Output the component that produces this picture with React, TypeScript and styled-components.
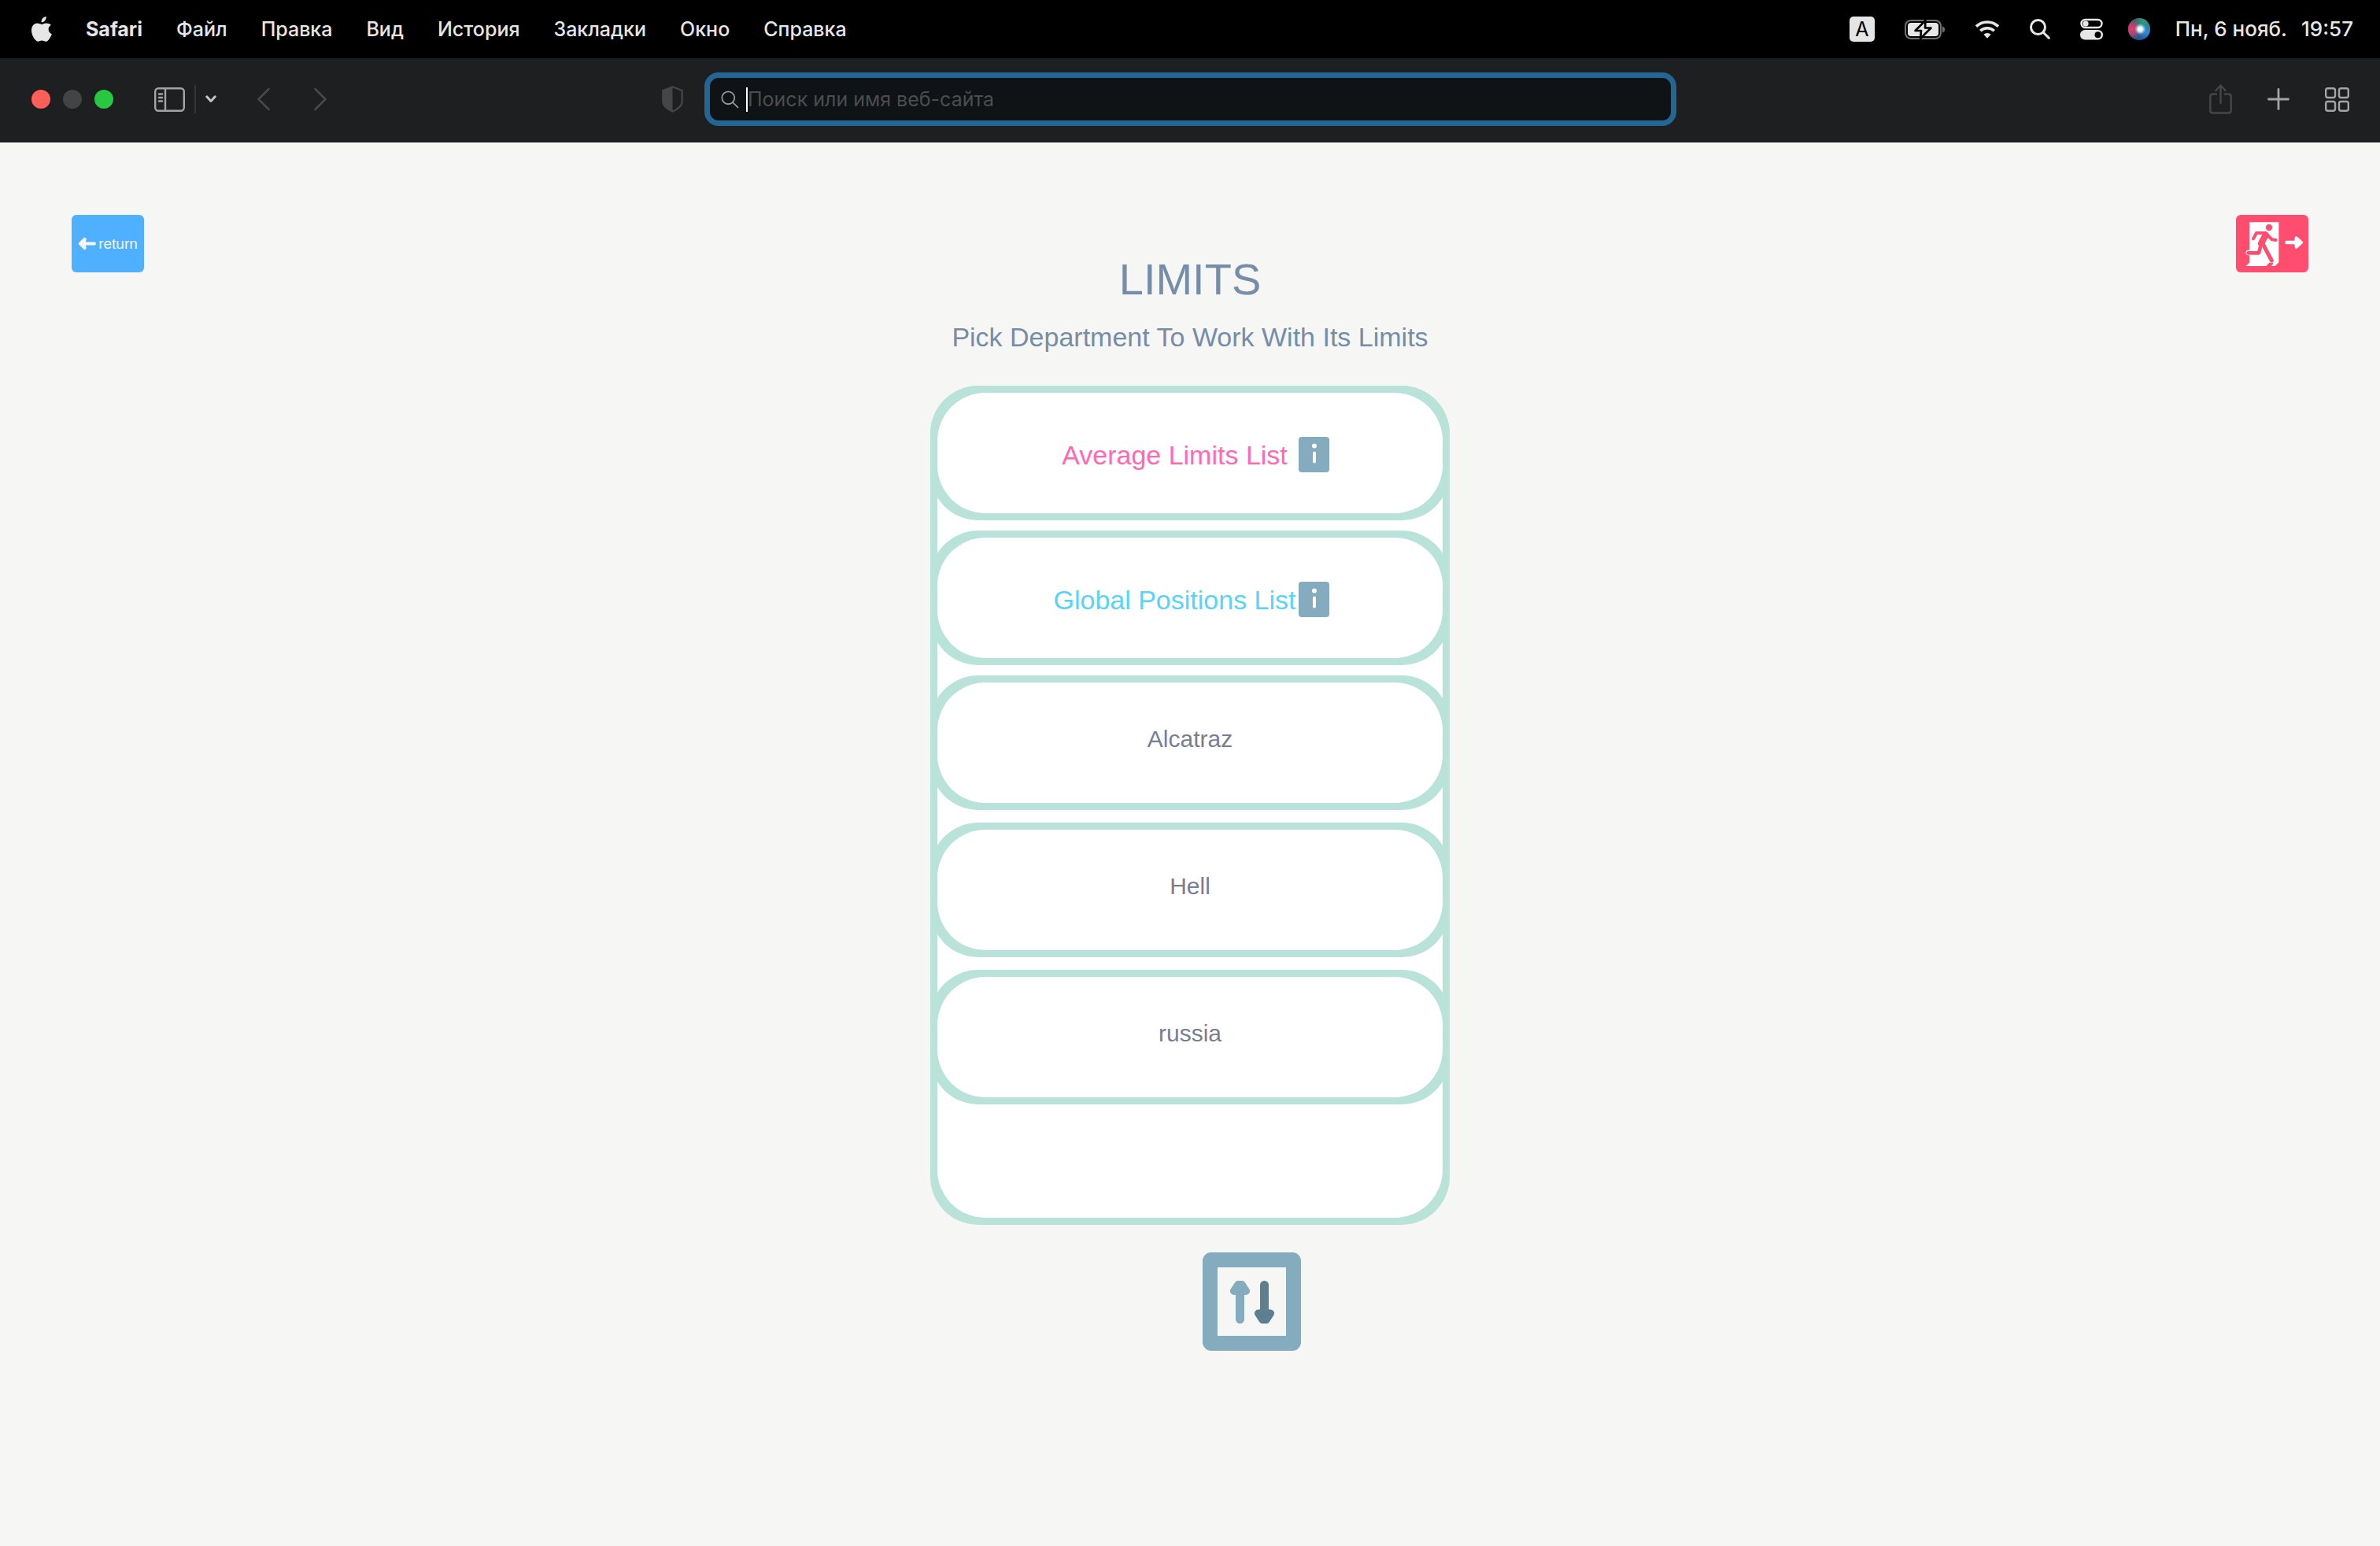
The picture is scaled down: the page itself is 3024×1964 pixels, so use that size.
import React from "react";
import styled, { createGlobalStyle } from "styled-components";

const uiFont = `Inter, "Noto Sans", sans-serif`;
const pageFont = `"Liberation Sans", Arial, sans-serif`;

const mint = "#b9e3d9";
const steel = "#84abbe";

const GlobalStyle = createGlobalStyle`
  * { box-sizing: border-box; }
  body { margin: 0; background: #f6f6f4; }
  button, input { font: inherit; color: inherit; }
`;

const Screen = styled.div`
  display: flex;
  flex-direction: column;
  min-height: 100vh;
`;

/* ---------- system menu bar ---------- */

const MenuBar = styled.header`
  display: flex;
  align-items: center;
  justify-content: space-between;
  height: 74px;
  padding: 0 34px 0 40px;
  background: #000;
  color: #e6e6e6;
  font-family: ${uiFont};
  font-size: 25px;
  font-weight: 500;
`;

const MenuGroup = styled.nav`
  display: flex;
  align-items: center;
  gap: 43px;
`;

const StatusGroup = styled.div<{ $gap: number }>`
  display: flex;
  align-items: center;
  gap: ${(p) => p.$gap}px;
`;

const BareButton = styled.button<{ $strong?: boolean }>`
  display: flex;
  align-items: center;
  padding: 0;
  border: 0;
  background: none;
  line-height: 32px;
  white-space: nowrap;
  font-weight: ${(p) => (p.$strong ? 700 : 500)};
  cursor: pointer;

  svg { display: block; }
`;

const InputSource = styled.span`
  width: 32px;
  height: 32px;
  border-radius: 5px;
  background: #e4e6e5;
  color: #000;
  text-align: center;
  line-height: 32px;
  font-weight: 400;
`;

const Clock = styled.time`
  display: flex;
  gap: 18px;
  font-size: 26px;
  line-height: 32px;
  white-space: nowrap;
`;

/* ---------- browser toolbar ---------- */

const Toolbar = styled.div`
  display: grid;
  grid-template-columns: 1fr minmax(0, 1235px) 1fr;
  align-items: center;
  height: 107px;
  padding: 0 39px 3px 40px;
  background: #1e1f21;
  color: #a3a4a5;
`;

const ToolSide = styled.div<{ $end?: boolean }>`
  display: flex;
  align-items: center;
  gap: ${(p) => (p.$end ? "45px" : "52px")};
  justify-content: ${(p) => (p.$end ? "flex-end" : "space-between")};
  padding-right: ${(p) => (p.$end ? 0 : 27)}px;
`;

const ToolCluster = styled.div<{ $gap: number }>`
  display: flex;
  align-items: center;
  gap: ${(p) => p.$gap}px;
`;

const Light = styled.button<{ $color: string }>`
  width: 24px;
  height: 24px;
  padding: 0;
  border: 0;
  border-radius: 50%;
  background: ${(p) => p.$color};
`;

const Divider = styled.span`
  width: 2px;
  height: 36px;
  background: #343537;
`;

const Address = styled.label`
  display: flex;
  align-items: center;
  height: 68px;
  padding: 0 14px;
  border: 7px solid #236693;
  border-radius: 18px;
  background: #0f1315;
  color: #97999a;
`;

const Caret = styled.span`
  width: 2px;
  height: 31px;
  margin-left: 9px;
  background: #fff;
`;

const AddressInput = styled.input`
  flex: 1;
  min-width: 0;
  height: 40px;
  padding: 0;
  border: 0;
  outline: 0;
  background: none;
  color: #fff;
  caret-color: transparent;
  font-family: ${uiFont};
  font-size: 25px;

  &::placeholder { color: #4b4d4e; opacity: 1; }
`;

/* ---------- page ---------- */

const Page = styled.main`
  display: grid;
  grid-template-columns: 92px minmax(0, 1fr) 92px;
  align-items: start;
  padding: 92px 91px;
  font-family: ${pageFont};
`;

const CornerButton = styled.button<{ $color: string }>`
  display: flex;
  align-items: center;
  justify-content: center;
  gap: 3px;
  height: 73px;
  padding: 0;
  border: 0;
  border-radius: 6px;
  background: ${(p) => p.$color};
  color: #f6f6f4;
  font-size: 19px;
  cursor: pointer;

  svg { display: block; }
`;

const Content = styled.section`
  display: flex;
  flex-direction: column;
  align-items: center;
  padding-top: 50px;
`;

const Title = styled.h1`
  margin: 0;
  color: #748da9;
  font-size: 56px;
  font-weight: 400;
  line-height: 64px;
`;

const Subtitle = styled.p`
  margin: 21px 0 42px;
  color: #748da9;
  font-size: 34px;
  line-height: 40px;
`;

const Frame = styled.div`
  padding: 9px;
  border-radius: 61px;
  background: ${mint};
`;

const Panel = styled(Frame)`
  width: 100%;
  max-width: 660px;
`;

const PanelFace = styled.div`
  display: flex;
  flex-direction: column;
  gap: 13px;
  padding-bottom: 144px;
  border-radius: 61px;
  background: #fff;
`;

const CardStack = styled.ul<{ $gap: number }>`
  display: flex;
  flex-direction: column;
  gap: ${(p) => p.$gap}px;
  margin: 0 -9px;
  padding: 0;
  list-style: none;

  &:first-child { margin-top: -9px; }
`;

const CardFace = styled.div<{ $plain?: boolean }>`
  display: flex;
  align-items: center;
  justify-content: center;
  height: 153px;
  padding: ${(p) => (p.$plain ? "0 0 9px" : "4px 0 0")};
  border-radius: 61px;
  background: #fff;
`;

const CardLink = styled.button<{ $color: string; $plain?: boolean }>`
  min-width: ${(p) => (p.$plain ? 0 : 315)}px;
  padding: 0;
  border: 0;
  background: none;
  color: ${(p) => p.$color};
  font-size: ${(p) => (p.$plain ? 30 : 34)}px;
  line-height: 46px;
  text-align: center;
  white-space: nowrap;
  cursor: pointer;
`;

const InfoButton = styled.button`
  width: 39px;
  height: 45px;
  padding: 0;
  border: 0;
  border-radius: 4px;
  background: ${steel};
  cursor: pointer;

  svg { display: block; }
`;

const SortButton = styled.button`
  width: 125px;
  height: 125px;
  margin: 35px 0 0 156px;
  padding: 0;
  border: 19px solid ${steel};
  border-radius: 11px;
  background: #f6f6f4;
  cursor: pointer;

  svg { display: block; }
`;

/* ---------- drawings ---------- */

const AppleIcon = () => (
  <svg width="26" height="32" viewBox="0 0 26 32" fill="#e6e6e6">
    <path d="M18.8 0c.2 2-.6 3.900-1.700 5.200-1.100 1.300-2.900 2.300-4.500 2.100-.3-1.900.6-3.900 1.700-5.100C15.400 1 17.300.1 18.800 0z" />
    <path d="M24.900 10.800c-2.300 1.400-3.300 3.200-3.300 5.500 0 2.700 1.600 4.900 4.200 6-.6 1.900-1.500 3.700-2.700 5.400-1.400 2-2.700 4-4.800 4-2 0-2.700-1.200-5-1.200-2.400 0-3.200 1.200-5.100 1.200-2.100 0-3.600-2.100-5-4.100C1.400 25 0 21.300 0 17.600c0-5.900 3.900-9 7.500-9 2.200 0 3.900 1.300 5.300 1.300 1.300 0 3.300-1.400 5.900-1.400 2.400 0 4.700.9 6.200 2.300z" />
  </svg>
);

const BatteryIcon = () => (
  <svg width="51" height="32" viewBox="0 0 51 32">
    <rect x="1" y="5" width="45" height="23" rx="7" fill="none" stroke="#717171" strokeWidth="2" />
    <path d="M48 12.500c2.500.9 3 2 3 4s-.5 3.100-3 4z" fill="#717171" />
    <rect x="4" y="8" width="39" height="17" rx="4" fill="#e6e6e6" />
    <path d="M26.500 5 13.500 18h7.500L20 28l13.500-13.500H26z" fill="#e6e6e6" stroke="#000" strokeWidth="2.600" strokeLinejoin="round" />
  </svg>
);

const WifiIcon = () => (
  <svg width="32" height="26" viewBox="0 0 33 26" fill="none" stroke="#e6e6e6" strokeWidth="3.800">
    <path d="M2 9.500a21 21 0 0 1 29 0" />
    <path d="M7.500 15.300a13 13 0 0 1 18 0" />
    <path d="M16.500 25l-4.700-5a7 7 0 0 1 9.400 0z" fill="#e6e6e6" stroke="none" />
  </svg>
);

const SearchIcon = ({ size, weight }: { size: number; weight: number }) => (
  <svg width={size} height={size} viewBox="0 0 26 26" fill="none" stroke="currentColor" strokeWidth={weight} strokeLinecap="round">
    <circle cx="10.500" cy="10.500" r="9" />
    <path d="M17.300 17.300l7 7" />
  </svg>
);

const ControlIcon = () => (
  <svg width="29" height="28" viewBox="0 0 29 28">
    <rect x="1.500" y="2" width="26" height="10" rx="5" fill="none" stroke="#e6e6e6" strokeWidth="2.400" />
    <circle cx="7" cy="7" r="3.600" fill="#e6e6e6" />
    <rect x="0" y="15" width="29" height="12.500" rx="6.200" fill="#e6e6e6" />
    <circle cx="22.500" cy="21.200" r="4" fill="#000" />
  </svg>
);

const SiriIcon = () => (
  <svg width="28" height="28" viewBox="0 0 28 28">
    <defs>
      <linearGradient id="siriBase" x1="0.300" y1="0" x2="0.700" y2="1">
        <stop offset="0" stopColor="#4a5a5c" />
        <stop offset="0.500" stopColor="#3f6a86" />
        <stop offset="1" stopColor="#1b4f8c" />
      </linearGradient>
      <radialGradient id="siriPink" cx="0.180" cy="0.500" r="0.400">
        <stop offset="0" stopColor="#e83a72" />
        <stop offset="0.600" stopColor="#c93a6c" stopOpacity="0.800" />
        <stop offset="1" stopColor="#c93a6c" stopOpacity="0" />
      </radialGradient>
      <radialGradient id="siriGreen" cx="0.720" cy="0.150" r="0.450">
        <stop offset="0" stopColor="#1fa57c" />
        <stop offset="1" stopColor="#1fa57c" stopOpacity="0" />
      </radialGradient>
      <radialGradient id="siriBlue" cx="0.850" cy="0.650" r="0.400">
        <stop offset="0" stopColor="#2a90e8" />
        <stop offset="1" stopColor="#2a90e8" stopOpacity="0" />
      </radialGradient>
      <radialGradient id="siriGlow" cx="0.550" cy="0.500" r="0.260">
        <stop offset="0" stopColor="#fff" />
        <stop offset="0.400" stopColor="#e2f6ff" />
        <stop offset="1" stopColor="#9fd8f0" stopOpacity="0" />
      </radialGradient>
    </defs>
    <circle cx="14" cy="14" r="14" fill="url(#siriBase)" />
    <circle cx="14" cy="14" r="14" fill="url(#siriPink)" />
    <circle cx="14" cy="14" r="14" fill="url(#siriGreen)" />
    <circle cx="14" cy="14" r="14" fill="url(#siriBlue)" />
    <circle cx="14" cy="14" r="14" fill="url(#siriGlow)" />
  </svg>
);

const SidebarIcon = () => (
  <svg width="39" height="31" viewBox="0 0 39 31" fill="none" stroke="#a3a4a5" strokeWidth="2.400" strokeLinecap="round">
    <rect x="1.200" y="1.200" width="36.600" height="28.600" rx="4" />
    <path d="M14 2v27M6 8.500h4M6 13h4M6 17.500h4" />
  </svg>
);

const ChevronDown = () => (
  <svg width="14" height="10" viewBox="0 0 14 10" fill="none" stroke="#c4c5c6" strokeWidth="3" strokeLinecap="round" strokeLinejoin="round">
    <path d="M1.800 1.800 7 7.500l5.200-5.700" />
  </svg>
);

const Chevron = ({ flip }: { flip?: boolean }) => (
  <svg width="16" height="30" viewBox="0 0 16 30" fill="none" stroke="#47484a" strokeWidth="2.600" strokeLinecap="round" strokeLinejoin="round">
    <path d={flip ? "M1.500 2 14.500 15 1.500 28" : "M14.500 2 1.500 15 14.500 28"} />
  </svg>
);

const ShieldIcon = () => (
  <svg width="27" height="34" viewBox="0 0 27 34">
    <path d="M13.500 1.200 25.700 6v14c0 6-6 9.500-12.200 12.700C7.300 29.500 1.300 26 1.300 20V6z" fill="none" stroke="#454648" strokeWidth="2.200" strokeLinejoin="round" />
    <path d="M13.500 1.200V32.700C7.300 29.500 1.300 26 1.300 20V6z" fill="#454648" />
  </svg>
);

const ShareIcon = () => (
  <svg width="29" height="38" viewBox="0 0 29 38" fill="none" stroke="#454648" strokeWidth="2.400" strokeLinecap="round" strokeLinejoin="round">
    <path d="M9 12.500H4.500q-3.200 0-3.200 3.200v17.600q0 3.200 3.200 3.200h20q3.200 0 3.200-3.200V15.700q0-3.200-3.200-3.200H20" />
    <path d="M14.500 24V2M8.500 8l6-6.500 6 6.500" />
  </svg>
);

const PlusIcon = () => (
  <svg width="28" height="28" viewBox="0 0 28 28" stroke="#a3a4a5" strokeWidth="2.800" strokeLinecap="round">
    <path d="M14 1.500v25M1.500 14h25" />
  </svg>
);

const TabsIcon = () => (
  <svg width="31" height="31" viewBox="0 0 31 31" fill="none" stroke="#a3a4a5" strokeWidth="2.400">
    <rect x="1.200" y="1.200" width="11.800" height="11.800" rx="2.500" />
    <rect x="18" y="1.200" width="11.800" height="11.800" rx="2.500" />
    <rect x="1.200" y="18" width="11.800" height="11.800" rx="2.500" />
    <rect x="18" y="18" width="11.800" height="11.800" rx="2.500" />
  </svg>
);

const ReturnArrow = () => (
  <svg width="23" height="17" viewBox="0 0 23 17" fill="#f6f6f4" stroke="#f6f6f4" strokeLinejoin="round" strokeLinecap="round">
    <path d="M2 8.500 8.500 2 9.500 3 8 8.500l1.500 5.500-1 1z" strokeWidth="2.500" />
    <path d="M8 8.500h13" strokeWidth="4" />
  </svg>
);

const ExitIcon = () => (
  <svg width="92" height="73" viewBox="93 69 276 219">
    <path d="M145 97H256V250L242 264H131L145 250z" fill="#fff" />
    <path d="M140 213H182" stroke="#fff" strokeWidth="19" strokeLinecap="round" />
    <g fill="none" stroke="#ff4d70" strokeLinecap="round" strokeLinejoin="round">
      <path d="M140 214H180L189 180" strokeWidth="14" />
      <path d="M159 160L171 138H206L230 163L245 165" strokeWidth="12" />
      <path d="M206 146L189 178" strokeWidth="25" />
      <path d="M198 184L229 243" strokeWidth="15" />
    </g>
    <circle cx="219" cy="117" r="12.500" fill="#ff4d70" />
    <path d="M208 264L220 251H236L228 264z" fill="#ff4d70" />
    <g fill="#fff" stroke="#fff" strokeLinecap="round" strokeLinejoin="round">
      <path d="M286 174H325" strokeWidth="13" />
      <path d="M323 156L343 174L323 192L320 174z" strokeWidth="11" />
    </g>
  </svg>
);

const InfoGlyph = () => (
  <svg width="39" height="45" viewBox="0 0 39 45" fill="#fff">
    <circle cx="20" cy="11.500" r="3" />
    <rect x="18" y="18.500" width="4" height="15" rx="2" />
  </svg>
);

const SortGlyph = () => (
  <svg width="87" height="87" viewBox="0 0 87 87">
    <g fill={steel}>
      <path d="M25.500 17h6q2 0 3.200 2l5.600 8.500q1.800 3.500-.3 5.500-1.500 2-4 2H21q-2.500 0-4-2-2.100-2-.3-5.500L22.300 19q1.200-2 3.200-2z" />
      <rect x="23" y="26" width="11" height="45.500" rx="5.500" />
    </g>
    <g fill="#5d7f90">
      <path d="M56.500 71.500h6q2 0 3.200-2l5.600-8.500q1.800-3.500-.3-5.500-1.500-2-4-2H52q-2.500 0-4 2-2.100 2-.3 5.500l5.600 8.500q1.200 2 3.200 2z" />
      <rect x="54" y="17" width="11" height="45.500" rx="5.500" />
    </g>
  </svg>
);

/* ---------- composition ---------- */

const menus = ["Файл", "Правка", "Вид", "История", "Закладки", "Окно", "Справка"];

const lists = [
  { name: "Average Limits List", color: "#ff69b4" },
  { name: "Global Positions List", color: "#5ad2fa" },
];

const departments = ["Alcatraz", "Hell", "russia"];

export default function App() {
  return (
    <Screen>
      <GlobalStyle />
      <MenuBar>
        <MenuGroup>
          <BareButton aria-label="Apple"><AppleIcon /></BareButton>
          <BareButton $strong>Safari</BareButton>
          {menus.map((m) => (
            <BareButton key={m}>{m}</BareButton>
          ))}
        </MenuGroup>
        <StatusGroup $gap={32}>
          <StatusGroup $gap={38}>
            <InputSource>A</InputSource>
            <BatteryIcon />
            <WifiIcon />
            <BareButton aria-label="Spotlight"><SearchIcon size={26} weight={3} /></BareButton>
            <BareButton aria-label="Control Center"><ControlIcon /></BareButton>
          </StatusGroup>
          <BareButton aria-label="Siri"><SiriIcon /></BareButton>
          <Clock>
            <span>Пн, 6 нояб.</span>
            <span>19:57</span>
          </Clock>
        </StatusGroup>
      </MenuBar>

      <Toolbar>
        <ToolSide>
          <ToolCluster $gap={52}>
            <ToolCluster $gap={16}>
              <Light $color="#ff5f57" aria-label="Close" />
              <Light $color="#434446" aria-label="Minimize" />
              <Light $color="#28c840" aria-label="Zoom" />
            </ToolCluster>
            <ToolCluster $gap={12}>
              <BareButton aria-label="Sidebar"><SidebarIcon /></BareButton>
              <Divider />
              <BareButton aria-label="Tab groups"><ChevronDown /></BareButton>
            </ToolCluster>
            <ToolCluster $gap={56}>
              <BareButton aria-label="Back"><Chevron /></BareButton>
              <BareButton aria-label="Forward"><Chevron flip /></BareButton>
            </ToolCluster>
          </ToolCluster>
          <BareButton aria-label="Privacy report"><ShieldIcon /></BareButton>
        </ToolSide>
        <Address>
          <SearchIcon size={23} weight={2} />
          <Caret />
          <AddressInput type="text" aria-label="Address" placeholder="Поиск или имя веб-сайта" />
        </Address>
        <ToolSide $end>
          <BareButton aria-label="Share"><ShareIcon /></BareButton>
          <BareButton aria-label="New tab"><PlusIcon /></BareButton>
          <BareButton aria-label="Tab overview"><TabsIcon /></BareButton>
        </ToolSide>
      </Toolbar>

      <Page>
        <CornerButton $color="#4eb0ff">
          <ReturnArrow />
          return
        </CornerButton>
        <Content>
          <Title>LIMITS</Title>
          <Subtitle>Pick Department To Work With Its Limits</Subtitle>
          <Panel>
            <PanelFace>
              <CardStack $gap={13}>
                {lists.map((l) => (
                  <Frame as="li" key={l.name}>
                    <CardFace>
                      <CardLink $color={l.color}>{l.name}</CardLink>
                      <InfoButton aria-label={`About ${l.name}`}><InfoGlyph /></InfoButton>
                    </CardFace>
                  </Frame>
                ))}
              </CardStack>
              <CardStack $gap={16}>
                {departments.map((d) => (
                  <Frame as="li" key={d}>
                    <CardFace $plain>
                      <CardLink $plain $color="#7a7c95">{d}</CardLink>
                    </CardFace>
                  </Frame>
                ))}
              </CardStack>
            </PanelFace>
          </Panel>
          <SortButton aria-label="Change order"><SortGlyph /></SortButton>
        </Content>
        <CornerButton $color="#ff4d70" aria-label="Exit">
          <ExitIcon />
        </CornerButton>
      </Page>
    </Screen>
  );
}
